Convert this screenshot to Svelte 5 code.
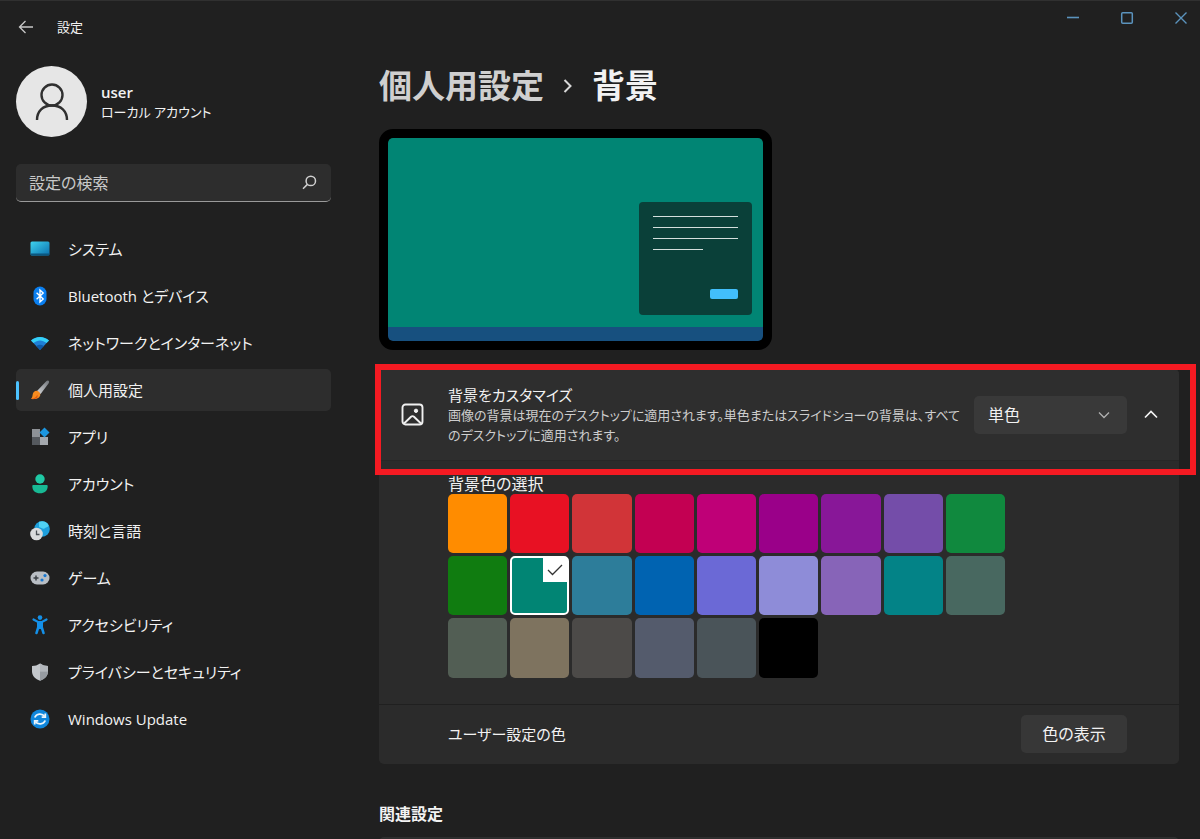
<script>
  let active = "personal";
  let selected = "#018574";
  let expanded = true;
  let search = "";
  let mode = "solid";

  const navItems = [
    { id: "system", label: "システム" },
    { id: "bluetooth", label: "Bluetooth とデバイス" },
    { id: "network", label: "ネットワークとインターネット" },
    { id: "personal", label: "個人用設定" },
    { id: "apps", label: "アプリ" },
    { id: "accounts", label: "アカウント" },
    { id: "time", label: "時刻と言語" },
    { id: "gaming", label: "ゲーム" },
    { id: "access", label: "アクセシビリティ" },
    { id: "privacy", label: "プライバシーとセキュリティ" },
    { id: "update", label: "Windows Update" }
  ];

  const colors = [
    "#ff8c00", "#e81123", "#d13438", "#c30052", "#bf0077", "#9a0089", "#881798", "#744da9", "#10893e",
    "#107c10", "#018574", "#2d7d9a", "#0063b1", "#6b69d6", "#8e8cd8", "#8764b8", "#038387", "#486860",
    "#525e54", "#7e735f", "#4c4a48", "#545b6c", "#4a5459", "#000000"
  ];
</script>

<div class="window">
  <header class="titlebar">
    <button class="back" aria-label="戻る">
      <svg width="16" height="14" viewBox="0 0 16 14" fill="none" stroke="#c8c8c8" stroke-width="1.3">
        <path d="M7.5 1 1.5 7l6 6M1.5 7H15" />
      </svg>
    </button>
    <span class="app-name">設定</span>
    <div class="window-buttons">
      <button aria-label="最小化">
        <svg width="14" height="14" viewBox="0 0 14 14" stroke="#5b93bd" stroke-width="1.6"><path d="M1 6.5h12" /></svg>
      </button>
      <button aria-label="最大化">
        <svg width="14" height="14" viewBox="0 0 14 14" fill="none" stroke="#5b93bd" stroke-width="1.5"><rect x="1.7" y="1.7" width="10.6" height="10.6" rx="1" /></svg>
      </button>
      <button aria-label="閉じる">
        <svg width="14" height="14" viewBox="0 0 14 14" stroke="#5b93bd" stroke-width="1.4"><path d="m1.5 1.5 11 11m0-11-11 11" /></svg>
      </button>
    </div>
  </header>

  <div class="body">
    <aside>
      <div class="account">
        <div class="avatar">
          <svg width="34" height="40" viewBox="0 0 34 40" fill="none" stroke="#303030" stroke-width="2.4">
            <circle cx="17" cy="13" r="10.5" />
            <path d="M2 38c0-9 6-14.500 15-14.500S32 29 32 38" />
          </svg>
        </div>
        <div>
          <div class="user">user</div>
          <div class="kind">ローカル アカウント</div>
        </div>
      </div>

      <div class="search">
        <input type="text" placeholder="設定の検索" aria-label="設定の検索" bind:value={search} />
        <svg width="15" height="15" viewBox="0 0 15 15" fill="none" stroke="#d0d0d0" stroke-width="1.5">
          <circle cx="8.8" cy="5.900" r="4.700" />
          <path d="M5.400 9.400 1 13.800" />
        </svg>
      </div>

      <nav>
        {#each navItems as item}
          <button class="nav-item" class:active={active === item.id} on:click={() => (active = item.id)}>
            <svg width="20" height="20" viewBox="0 0 20 20">
              {#if item.id === "system"}
                <defs>
                  <linearGradient id="g-sys" x1="0" y1="0" x2="1" y2="1">
                    <stop offset="0" stop-color="#3fd3ee" />
                    <stop offset="1" stop-color="#0a6fae" />
                  </linearGradient>
                </defs>
                <rect x="0.500" y="2.500" width="19" height="14" rx="1.500" fill="url(#g-sys)" />
                <path d="M0.500 14.500h19v.5a1.500 1.500 0 0 1-1.500 1.500H2a1.500 1.500 0 0 1-1.500-1.500z" fill="#0b567f" />
              {:else if item.id === "bluetooth"}
                <rect x="3.500" y="0.500" width="13" height="19" rx="6.500" fill="#0a7ff0" />
                <path d="m6.600 6.800 6.600 6.200-3.200 3V4l3.200 3-6.600 6.200" fill="none" stroke="#fff" stroke-width="1.400" />
              {:else if item.id === "network"}
                <path d="M1 7.500C6 2.800 14 2.800 19 7.500l-9 9.500z" fill="#1f7fd6" />
                <path d="M1 7.500C6 2.800 14 2.800 19 7.500l-2.500 2.600c-4-3.400-9-3.400-13 0z" fill="#35d0f7" />
                <path d="M6.200 13c2.400-1.800 5.200-1.800 7.600 0L10 17z" fill="#0f5aa8" />
              {:else if item.id === "personal"}
                <defs>
                  <linearGradient id="g-brush" x1="1" y1="0" x2="0" y2="1">
                    <stop offset="0" stop-color="#6f7378" />
                    <stop offset="1" stop-color="#d5d7da" />
                  </linearGradient>
                </defs>
                <path d="M18.500.8c1 .8.700 1.700 0 2.800L10.600 14 7 11 16.300 1.300c.8-.8 1.500-1 2.200-.5z" fill="url(#g-brush)" />
                <path d="M6.500 10.700c2.500.3 4 2 3.800 4.200C9.500 18.500 5 19.500 1 19c1.500-1.500 1.300-3 1.800-5 .4-1.900 1.800-3.300 3.700-3.300z" fill="#f78b1f" />
                <path d="M1 19c3-.4 5-1.700 6.300-4.300.8 1.600.2 2.800-.8 3.600-1.500.8-3.500 1-5.500.7z" fill="#e15a12" />
              {:else if item.id === "apps"}
                <rect x="2" y="2" width="8" height="8" fill="#8e9297" />
                <rect x="2" y="10" width="8" height="8" fill="#55595e" />
                <rect x="10" y="10" width="8" height="8" fill="#a4a8ad" />
                <path d="m14.500.5 5 5-5 5-5-5z" fill="#1b96e0" />
              {:else if item.id === "accounts"}
                <circle cx="10" cy="5" r="4.700" fill="#1fc9a5" />
                <path d="M3.500 11h13c.8 0 1.200.5 1.200 1.200 0 4.600-3.200 7-7.700 7s-7.700-2.400-7.700-7c0-.7.400-1.200 1.200-1.200z" fill="#18b994" />
              {:else if item.id === "time"}
                <circle cx="12" cy="8" r="7.800" fill="#1e9fdc" />
                <path d="M9 .8c4-1.500 8 0 9.700 3.500-1 2.700-3 1.700-4.200 3.200-1.500 1-3.500-1-5.500-1.500z" fill="#4fd2f5" />
                <circle cx="6.500" cy="13" r="6.300" fill="#d9dbdd" />
                <path d="M6.500 9.500V13.500h3" fill="none" stroke="#4a4f55" stroke-width="1.300" />
              {:else if item.id === "gaming"}
                <rect x="0.500" y="3.500" width="19" height="13" rx="6.500" fill="#b9bec4" />
                <path d="M3.500 10h5M6 7.500v5" stroke="#3c4146" stroke-width="1.500" />
                <circle cx="15" cy="7.600" r="1.600" fill="#1878d0" />
                <circle cx="12" cy="12" r="1.600" fill="#1878d0" />
              {:else if item.id === "access"}
                <g fill="none" stroke="#1490e8" stroke-linecap="round">
                  <path d="M3.500 4.500 8 7h4l4.500-2.500" stroke-width="2.200" />
                  <path d="m6.500 18 1.800-6L8.300 8h3.400v4l1.800 6" stroke-width="2.600" />
                  <path d="M10 7.500v5" stroke-width="3.500" />
                </g>
                <circle cx="10" cy="2.600" r="2.300" fill="#1490e8" />
              {:else if item.id === "privacy"}
                <path d="M10 1.500c2.500 1.700 5 2.500 8 2.500v5.500c0 4.500-3.500 7.500-8 9.300-4.500-1.800-8-4.800-8-9.300V4c3 0 5.500-.8 8-2.500z" fill="#c3c7cb" />
                <path d="M10 1.500c2.500 1.700 5 2.500 8 2.500v5.500H10z" fill="#b2b6bb" />
                <path d="M10 9.500h8c0 4.500-3.500 7.500-8 9.300z" fill="#969ba1" />
              {:else}
                <circle cx="10" cy="10" r="9.500" fill="#0f86dc" />
                <g fill="none" stroke="#eaf5fd" stroke-width="1.800">
                  <path d="M4.800 8.500C6.300 4.500 12 3.800 14.700 7.500M15.200 11.500c-1.500 4-7.200 4.700-9.900 1" />
                  <path d="M15.300 4.500v3.600h-3.600M4.700 15.500v-3.600h3.600" />
                </g>
              {/if}
            </svg>
            <span>{item.label}</span>
          </button>
        {/each}
      </nav>
    </aside>

    <main>
      <h1>
        <a href="#personal">個人用設定</a>
        <svg width="10" height="16" viewBox="0 0 10 16" fill="none" stroke="#d8d8d8" stroke-width="2"><path d="m1.500 2 6 6-6 6" /></svg>
        <span>背景</span>
      </h1>

      <div class="monitor">
        <div class="screen" style="background: {selected}">
          <div class="dialog">
            <i></i>
            <i></i>
            <i></i>
            <i class="short"></i>
            <b></b>
          </div>
        </div>
        <div class="taskbar"></div>
      </div>

      <section class="card">
        <div class="card-head">
          <svg class="picture" width="23" height="23" viewBox="0 0 23 23" fill="none" stroke="#f0f0f0" stroke-width="1.900">
            <rect x="1.500" y="1.500" width="20" height="20" rx="3" />
            <path d="m3 20.500 7-6.700c.9-.8 2.100-.8 3 0l7 6.700" />
            <circle cx="15" cy="7.800" r="1.700" fill="#f0f0f0" stroke-width="1" />
          </svg>
          <div class="desc">
            <label for="mode">背景をカスタマイズ</label>
            <p>画像の背景は現在のデスクトップに適用されます。単色またはスライドショーの背景は、すべてのデスクトップに適用されます。</p>
          </div>
          <div class="select">
            <select id="mode" bind:value={mode}>
              <option value="solid">単色</option>
            </select>
            <svg width="12" height="8" viewBox="0 0 12 8" fill="none" stroke="#b0b0b0" stroke-width="1.300"><path d="m1 1.500 5 5 5-5" /></svg>
          </div>
          <button class="toggle" class:closed={!expanded} aria-label="展開" on:click={() => (expanded = !expanded)}>
            <svg width="14" height="9" viewBox="0 0 14 9" fill="none" stroke="#f4f4f4" stroke-width="1.700"><path d="m1 7.500 6-6 6 6" /></svg>
          </button>
          <div class="highlight"></div>
        </div>

        {#if expanded}
          <div class="palette">
            <h2>背景色の選択</h2>
            <div class="swatches">
              {#each colors as color}
                <button
                  class="swatch"
                  class:selected={selected === color}
                  style="background-color: {color}"
                  aria-label={color}
                  on:click={() => (selected = color)}>
                  {#if selected === color}
                    <span class="check">
                      <svg width="16" height="12" viewBox="0 0 16 12" fill="none" stroke="#333" stroke-width="1.300"><path d="m1 6 4.500 4.500L15 1" /></svg>
                    </span>
                  {/if}
                </button>
              {/each}
            </div>
          </div>
          <div class="custom">
            <span>ユーザー設定の色</span>
            <button>色の表示</button>
          </div>
        {/if}
      </section>

      <h3>関連設定</h3>
      <section class="card related"></section>
    </main>
  </div>
</div>

<style>
  :global(body) {
    background: #202020;
  }

  .window {
    box-sizing: border-box;
    height: 100vh;
    overflow: hidden;
    display: flex;
    flex-direction: column;
    border-top: 1px solid #303030;
    background: #202020;
    color: #f2f2f2;
    font-family: "Open Sans", "Noto Sans CJK JP", sans-serif;
    font-size: 16px;
    line-height: 20px;
    font-feature-settings: "palt";
  }

  button,
  input,
  select {
    box-sizing: border-box;
    border: none;
    margin: 0;
    padding: 0;
    background: transparent;
    color: inherit;
    font: inherit;
    font-feature-settings: inherit;
  }

  svg {
    display: block;
    flex: none;
  }

  .titlebar {
    display: flex;
    align-items: center;
    height: 52px;
    padding-left: 18px;
    flex: none;
  }

  .back {
    margin-right: 23px;
  }

  .app-name {
    font-size: 13px;
  }

  .window-buttons {
    display: flex;
    align-self: flex-start;
    margin-left: auto;
  }

  .window-buttons button {
    display: flex;
    justify-content: center;
    align-items: center;
    width: 54px;
    height: 34px;
  }

  .window-buttons button:last-child {
    width: 38px;
    margin-left: 8px;
  }

  .body {
    display: flex;
    flex: 1;
    min-height: 0;
  }

  aside {
    flex: none;
    width: 315px;
    padding: 13px 48px 0 16px;
  }

  .account {
    display: flex;
    align-items: center;
    gap: 14px;
  }

  .avatar {
    display: flex;
    justify-content: center;
    align-items: center;
    width: 71px;
    height: 71px;
    border-radius: 50%;
    background: #e6e6e6;
  }

  .user {
    font-size: 15px;
    font-weight: 600;
  }

  .kind {
    font-size: 13px;
  }

  .search {
    display: flex;
    align-items: center;
    box-sizing: border-box;
    height: 38px;
    margin-top: 27px;
    padding: 0 14px 0 13px;
    border-radius: 5px;
    border-bottom: 1px solid #9a9a9a;
    background: #2d2d2d;
  }

  .search input {
    flex: 1;
    min-width: 0;
    outline: none;
  }

  .search input::placeholder {
    color: #c8c8c8;
  }

  nav {
    display: flex;
    flex-direction: column;
    gap: 5px;
    margin-top: 26px;
  }

  .nav-item {
    display: flex;
    align-items: center;
    gap: 18px;
    height: 42px;
    padding-left: 11px;
    border-left: 3px solid transparent;
    border-radius: 5px;
    font-size: 15px;
    text-align: left;
  }

  .nav-item.active {
    border-left: none;
    padding-left: 0;
    background: #2d2d2d;
  }

  .nav-item.active::before {
    content: "";
    width: 3px;
    height: 19px;
    margin-right: -7px;
    border-radius: 2px;
    background: #4cc2ff;
  }

  main {
    flex: 1;
    min-width: 0;
    padding: 12px 21px 0 0;
  }

  h1 {
    display: flex;
    align-items: center;
    gap: 19px;
    margin: 0;
    font-size: 33px;
    line-height: 42px;
    font-weight: 600;
  }

  h1 a {
    color: #cfcfcf;
    text-decoration: none;
  }

  .monitor {
    box-sizing: border-box;
    display: flex;
    flex-direction: column;
    width: 393px;
    height: 221px;
    margin-top: 22px;
    border: 9px solid #000;
    border-radius: 14px;
    overflow: hidden;
    background: #000;
  }

  .screen {
    flex: 1;
    display: flex;
    justify-content: flex-end;
    align-items: flex-end;
    padding: 0 11px 12px 0;
    border-radius: 4px 4px 0 0;
  }

  .taskbar {
    height: 14px;
    border-radius: 0 0 4px 4px;
    background: #17507f;
  }

  .dialog {
    box-sizing: border-box;
    display: flex;
    flex-direction: column;
    gap: 9px;
    width: 113px;
    height: 113px;
    padding: 14px;
    border-radius: 4px;
    background: #0a4039;
  }

  .dialog i {
    height: 1px;
    border-bottom: 1px solid #d4dfdd;
    flex: none;
    box-sizing: border-box;
    margin-bottom: 1px;
  }

  .dialog .short {
    width: 50px;
  }

  .dialog b {
    width: 28px;
    height: 10px;
    margin: auto 0 2px auto;
    border-radius: 2px;
    background: #42bffb;
  }

  .card {
    margin-top: 19px;
    border-radius: 5px;
    background: #2b2b2b;
  }

  .card-head {
    position: relative;
    display: flex;
    align-items: center;
    box-sizing: border-box;
    min-height: 92px;
    padding: 0 15px 0 22px;
    border-bottom: 1px solid #272727;
    border-radius: 5px 5px 0 0;
    background: #2e2e2e;
  }

  .desc {
    flex: 1;
    margin-left: 24px;
  }

  .desc label {
    font-size: 15px;
  }

  .desc p {
    max-width: 514px;
    margin: 0;
    color: #cdcdcd;
    font-size: 13px;
  }

  .select {
    display: grid;
    align-items: center;
    width: 153px;
    margin-right: 10px;
  }

  .select select {
    grid-area: 1 / 1;
    height: 38px;
    padding-left: 14px;
    border-radius: 5px;
    background: #393939;
    appearance: none;
  }

  .select svg {
    grid-area: 1 / 1;
    justify-self: end;
    margin-right: 17px;
    pointer-events: none;
  }

  .toggle {
    display: flex;
    justify-content: center;
    align-items: center;
    width: 27px;
    height: 38px;
  }

  .toggle.closed svg {
    transform: rotate(180deg);
  }

  /* frame drawn round the header, a little larger than the card */
  .highlight {
    position: absolute;
    inset: -5px -17px -15px -4px;
    border: 6px solid #f51a22;
    pointer-events: none;
  }

  .palette {
    padding: 13px 68px 26px 69px;
  }

  h2 {
    margin: 0;
    font-size: 16px;
    font-weight: 400;
  }

  .swatches {
    display: grid;
    grid-template-columns: repeat(9, 1fr);
    gap: 3px;
    max-width: 557px;
  }

  .swatch {
    display: flex;
    justify-content: flex-end;
    align-items: flex-start;
    aspect-ratio: 1;
    border-radius: 5px;
  }

  .swatch.selected {
    border: 2px solid #fff;
  }

  .check {
    display: flex;
    justify-content: center;
    align-items: center;
    width: 24px;
    height: 24px;
    background: #fff;
  }

  .custom {
    display: flex;
    justify-content: space-between;
    align-items: center;
    height: 59px;
    padding: 0 52px 0 69px;
    border-top: 1px solid #202020;
  }

  .custom span {
    font-size: 15px;
  }

  .custom button {
    width: 106px;
    height: 38px;
    border-radius: 5px;
    background: #373737;
  }

  h3 {
    margin: 40px 0 0;
    font-size: 16px;
    font-weight: 600;
  }

  .related {
    margin-top: 13px;
    min-height: 68px;
    background: #2e2e2e;
  }
</style>
